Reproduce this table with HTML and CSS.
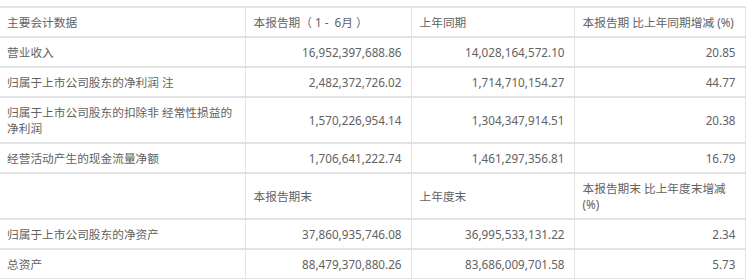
FILE: index.html
```html
<!DOCTYPE html>
<html>
	<head>
		<meta charset='utf-8'>
		<title>主要会计数据</title>
		<link rel="stylesheet" href="styles.css">
	</head>
	<body>
		<table class='report'>
			<colgroup>
				<col class='c-name'>
				<col class='c-cur'>
				<col class='c-prev'>
				<col class='c-chg'>
			</colgroup>
			<tbody>
				<tr>
					<td>主要会计数据</td>
					<td>本报告期（&nbsp;1&nbsp;-&nbsp;&nbsp;6月&nbsp;）</td>
					<td>上年同期</td>
					<td class='num'>本报告期 比上年同期增减 (%)</td>
				</tr>
				<tr>
					<td>营业收入</td>
					<td class='num'>16,952,397,688.86</td>
					<td class='num'>14,028,164,572.10</td>
					<td class='num'>20.85</td>
				</tr>
				<tr>
					<td>归属于上市公司股东的净利润 注</td>
					<td class='num'>2,482,372,726.02</td>
					<td class='num'>1,714,710,154.27</td>
					<td class='num'>44.77</td>
				</tr>
				<tr>
					<td>归属于上市公司股东的扣除非 经常性损益的净利润</td>
					<td class='num'>1,570,226,954.14</td>
					<td class='num'>1,304,347,914.51</td>
					<td class='num'>20.38</td>
				</tr>
				<tr>
					<td>经营活动产生的现金流量净额</td>
					<td class='num'>1,706,641,222.74</td>
					<td class='num'>1,461,297,356.81</td>
					<td class='num'>16.79</td>
				</tr>
				<tr>
					<td></td>
					<td>本报告期末</td>
					<td>上年度末</td>
					<td>本报告期末 比上年度末增减 (%)</td>
				</tr>
				<tr>
					<td>归属于上市公司股东的净资产</td>
					<td class='num'>37,860,935,746.08</td>
					<td class='num'>36,995,533,131.22</td>
					<td class='num'>2.34</td>
				</tr>
				<tr>
					<td>总资产</td>
					<td class='num'>88,479,370,880.26</td>
					<td class='num'>83,686,009,701.58</td>
					<td class='num'>5.73</td>
				</tr>
			</tbody>
		</table>
	</body>
</html>
```

FILE: styles.css
```css
:root {
	--line: rgb(226, 226, 226);
	--text: rgb(98, 98, 98);
}
html {
	background-color: #fff;
	color: var(--text);
	font-family: "Noto Sans", "Noto Sans CJK SC", sans-serif;
	font-size: 11.7px;
}
body {
	margin: 0;
	padding: 6px 0 0 0;
}
.report {
	border-collapse: collapse;
	table-layout: fixed;
	width: 745px;
}
.c-name { width: 245px; }
.c-cur { width: 166px; }
.c-prev { width: 163px; }
.c-chg { width: 171px; }
td {
	border-top: 2px solid var(--line);
	border-bottom: 2px solid var(--line);
	border-left: 1px solid var(--line);
	border-right: 1px solid var(--line);
	padding: 6px 9px 6px 8px;
	line-height: 16px;
	vertical-align: middle;
	text-align: left;
}
td:first-child {
	border-left: 0;
	padding-left: 7px;
}
.num {
	text-align: right;
}
tr:first-child .num {
	text-align: left;
}
```
